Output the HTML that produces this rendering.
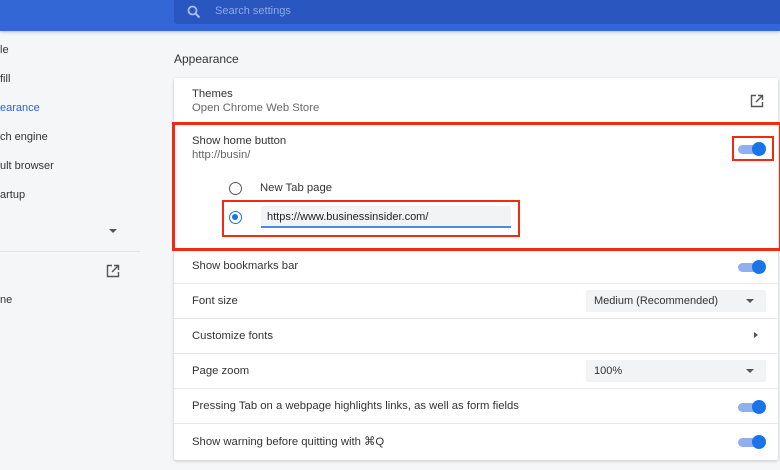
<!DOCTYPE html>
<html><head><style>
*{margin:0;padding:0;box-sizing:border-box}
body{width:780px;height:470px;overflow:hidden;background:#f5f6f7;font-family:"Liberation Sans",sans-serif;position:relative;color:#333}
.top{position:absolute;left:0;top:0;width:780px;height:31px;background:#3367d6;box-shadow:0 1px 3px rgba(0,0,0,.25)}
.search{position:absolute;left:174px;top:0;width:606px;height:24px;background:#2a56c0;border-radius:0 0 0 3px}
.search span{position:absolute;left:41px;top:5px;font-size:11px;color:#8fa8e8}
.side{position:absolute;left:0;font-size:11px;color:#333}
.card{position:absolute;left:174px;top:78px;width:604px;height:382px;background:#fff;box-shadow:0 1px 3px rgba(0,0,0,.2);border-radius:2px}
.row{position:absolute;left:18px;font-size:11.3px;color:#333}
.sep{position:absolute;left:0;width:604px;height:1px;background:#e8e8e8}
.tog{position:absolute;width:28px;height:10px}
.tog:before{content:"";position:absolute;left:0;top:1px;width:26px;height:9px;border-radius:5px;background:#8fb0f0}
.tog:after{content:"";position:absolute;right:0;top:-2px;width:14px;height:14px;border-radius:50%;background:#1a73e8}
.sel{position:absolute;left:412px;width:180px;height:22px;background:#f1f3f4;font-size:11px;color:#333;padding:5px 8px}
.sel:after{content:"";position:absolute;right:12px;top:9px;border:4px solid transparent;border-top:4px solid #555}
.red{position:absolute;border:3px solid #f42a10}
</style></head><body>
<div class="top"><div class="search">
<svg style="position:absolute;left:13px;top:5px" width="14" height="14" viewBox="0 0 14 14"><circle cx="5.5" cy="5.5" r="4" fill="none" stroke="#a8bdf0" stroke-width="1.8"/><path d="M8.5 8.5L12.5 12.5" stroke="#a8bdf0" stroke-width="2"/></svg>
<span>Search settings</span></div></div>

<div class="side" style="top:44px">le</div>
<div class="side" style="top:73px">fill</div>
<div class="side" style="top:102px;color:#2a62d2">earance</div>
<div class="side" style="top:131px">ch engine</div>
<div class="side" style="top:160px">ult browser</div>
<div class="side" style="top:189px">artup</div>
<div style="position:absolute;left:109px;top:229px;border:4px solid transparent;border-top:4px solid #555"></div>
<div style="position:absolute;left:0;top:251px;width:140px;height:1px;background:#e4e4e4"></div>
<svg style="position:absolute;left:106px;top:264px" width="14" height="14" viewBox="0 0 14 14"><path d="M6 1.5H1.5v11h11V8" fill="none" stroke="#555" stroke-width="1.4"/><path d="M8 1.5h4.5V6M12.5 1.5L6 8" fill="none" stroke="#555" stroke-width="1.4"/></svg>
<div class="side" style="top:294px">ne</div>

<div style="position:absolute;left:174px;top:52px;font-size:12px;color:#333">Appearance</div>

<div class="card">
<div class="row" style="top:10px">Themes</div>
<div class="row" style="top:24px;color:#666">Open Chrome Web Store</div>
<svg style="position:absolute;left:576px;top:16px" width="14" height="14" viewBox="0 0 14 14"><path d="M6 1.5H1.5v11h11V8" fill="none" stroke="#555" stroke-width="1.4"/><path d="M8 1.5h4.5V6M12.5 1.5L6 8" fill="none" stroke="#555" stroke-width="1.4"/></svg>
<div class="sep" style="top:44px"></div>
<div class="row" style="top:57px">Show home button</div>
<div class="row" style="top:71px;color:#666">http://busin/</div>
<div class="tog" style="left:564px;top:66px"></div>
<div style="position:absolute;left:55px;top:104px;width:13px;height:13px;border:1.6px solid #555;border-radius:50%"></div>
<div class="row" style="left:86px;top:104px">New Tab page</div>
<div style="position:absolute;left:55px;top:133px;width:13px;height:13px;border:1.6px solid #1a73e8;border-radius:50%"><div style="position:absolute;left:2px;top:2px;width:6px;height:6px;background:#1a73e8;border-radius:50%"></div></div>
<div style="position:absolute;left:87px;top:128px;width:250px;height:22px;background:#f1f3f4;border-bottom:2px solid #4a89e0;font-size:11px;padding:5px 6px;color:#222">https://www.businessinsider.com/</div>
<div class="sep" style="top:172px"></div>
<div class="row" style="top:182px">Show bookmarks bar</div>
<div class="tog" style="left:564px;top:184px"></div>
<div class="sep" style="top:205px"></div>
<div class="row" style="top:217px">Font size</div>
<div class="sel" style="top:212px">Medium (Recommended)</div>
<div class="sep" style="top:240px"></div>
<div class="row" style="top:252px">Customize fonts</div>
<div style="position:absolute;left:580px;top:254px;border:3px solid transparent;border-left:4px solid #555"></div>
<div class="sep" style="top:275px"></div>
<div class="row" style="top:287px">Page zoom</div>
<div class="sel" style="top:282px">100%</div>
<div class="sep" style="top:310px"></div>
<div class="row" style="top:322px">Pressing Tab on a webpage highlights links, as well as form fields</div>
<div class="tog" style="left:564px;top:324px"></div>
<div class="sep" style="top:345px"></div>
<div class="row" style="top:357px">Show warning before quitting with ⌘Q</div>
<div class="tog" style="left:564px;top:359px"></div>
</div>

<div class="red" style="left:172px;top:122px;width:610px;height:129px"></div>
<div class="red" style="left:732px;top:136px;width:42px;height:25px;border-width:2.5px"></div>
<div class="red" style="left:222px;top:200px;width:298px;height:37px;border-width:2.5px"></div>
</body></html>
